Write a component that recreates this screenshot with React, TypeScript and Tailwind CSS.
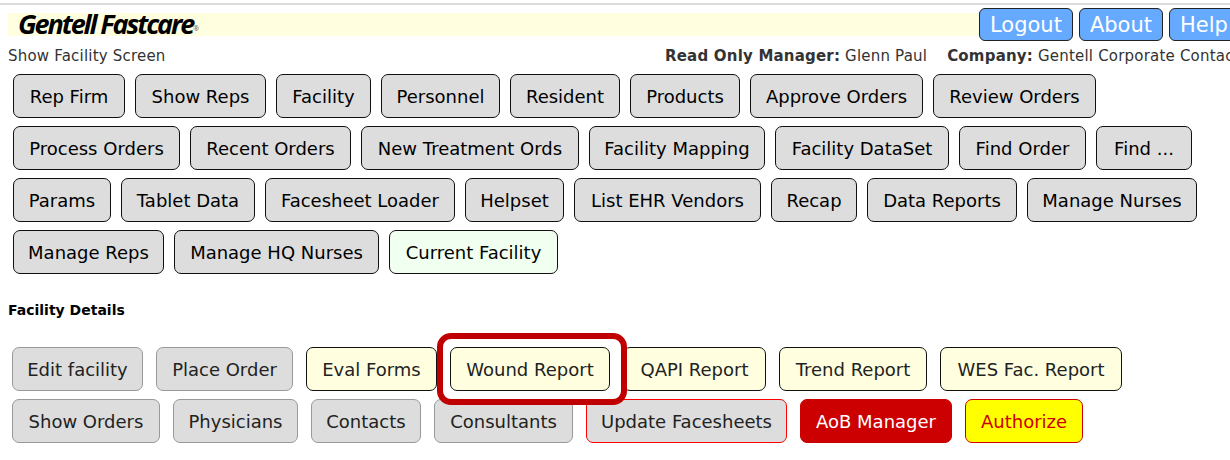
const topButtons = [
  { label: 'Rep Firm', w: 'w-[112px]' },
  { label: 'Show Reps', w: 'w-[131px]' },
  { label: 'Facility', w: 'w-[95px]' },
  { label: 'Personnel', w: 'w-[119px]' },
  { label: 'Resident', w: 'w-[110px]' },
  { label: 'Products', w: 'w-[110px]' },
  { label: 'Approve Orders', w: 'w-[173px]' },
  { label: 'Review Orders', w: 'w-[163px]' },
  { label: 'Process Orders', w: 'w-[167px]' },
  { label: 'Recent Orders', w: 'w-[161px]' },
  { label: 'New Treatment Ords', w: 'w-[218px]' },
  { label: 'Facility Mapping', w: 'w-[176px]' },
  { label: 'Facility DataSet', w: 'w-[174px]' },
  { label: 'Find Order', w: 'w-[127px]' },
  { label: 'Find ...', w: 'w-[96px]' },
  { label: 'Params', w: 'w-[98px]' },
  { label: 'Tablet Data', w: 'w-[134px]' },
  { label: 'Facesheet Loader', w: 'w-[190px]' },
  { label: 'Helpset', w: 'w-[99px]' },
  { label: 'List EHR Vendors', w: 'w-[187px]' },
  { label: 'Recap', w: 'w-[86px]' },
  { label: 'Data Reports', w: 'w-[150px]' },
  { label: 'Manage Nurses', w: 'w-[170px]' },
  { label: 'Manage Reps', w: 'w-[151px]' },
  { label: 'Manage HQ Nurses', w: 'w-[205px]' },
];

const base = 'h-[44px] pt-[1px] rounded-[7px] border whitespace-nowrap text-[18px] leading-none';
const gray = `${base} bg-[#dddddd] border-[#999999] text-[#222222]`;
const cream = `${base} bg-[#ffffe0] border-[#111111] text-[#222222]`;

export default function App() {
  return (
    <div className="relative w-[1230px] h-[460px] overflow-hidden bg-white font-['DejaVu_Sans',Verdana,sans-serif]">
      <div className="h-[2px] mt-[3px] bg-[#dddddd]" />

      <div className="relative h-[39px]">
        <div className="absolute left-[8px] right-[250px] top-[8px] h-[23px] bg-[#ffffe0]" />
        <div className="absolute left-[18px] top-[2px] font-['Open_Sans',Arial,sans-serif] font-bold italic text-[27px] leading-[34px] tracking-[-2.1px] text-black">
          Gentell Fastcare<sup className="text-[7px] font-normal tracking-normal text-[#555555]">®</sup>
        </div>
        <div className="absolute left-[979px] top-[3px] flex gap-[6px]">
          {['Logout', 'About', 'Help'].map((label) => (
            <button
              key={label}
              className="h-[33px] pt-[2px] px-[10px] rounded-[6px] border border-[#222222] bg-[#66aaff] text-white text-[21px] leading-none whitespace-nowrap"
            >
              {label}
            </button>
          ))}
        </div>
      </div>

      <div className="flex h-[23px] pt-[2px] items-center pl-[8px] text-[15px] tracking-[0.2px] text-[#333333] whitespace-nowrap">
        <span className="w-[657px] shrink-0">Show Facility Screen</span>
        <span className="shrink-0"><b>Read Only Manager:</b> Glenn Paul</span>
        <span className="ml-[20px] shrink-0"><b>Company:</b> Gentell Corporate Contact</span>
      </div>

      <div className="flex flex-wrap gap-x-[10px] gap-y-[8px] pl-[13px] pt-[7px]">
        {topButtons.map((b) => (
          <button key={b.label} className={`${base} ${b.w} bg-[#dddddd] border-[#111111] text-black`}>
            {b.label}
          </button>
        ))}
        <button className={`${base} w-[169px] bg-[#f0fff0] border-[#111111] text-black`}>Current Facility</button>
      </div>

      <div className="pl-[8px] mt-[26px] text-[14px] font-bold leading-[20px] text-black">Facility Details</div>

      <div className="flex gap-x-[13px] pl-[12px] mt-[27px]">
        <button className={`${gray} w-[131px]`}>Edit facility</button>
        <button className={`${gray} w-[137px]`}>Place Order</button>
        <button className={`${cream} w-[131px]`}>Eval Forms</button>
        <button className={`${cream} w-[160px]`}>Wound Report</button>
        <button className={`${cream} w-[143px]`}>QAPI Report</button>
        <button className={`${cream} w-[148px]`}>Trend Report</button>
        <button className={`${cream} w-[182px]`}>WES Fac. Report</button>
      </div>
      <div className="flex gap-x-[13px] pl-[12px] mt-[8px]">
        <button className={`${gray} w-[148px]`}>Show Orders</button>
        <button className={`${gray} w-[125px]`}>Physicians</button>
        <button className={`${gray} w-[110px]`}>Contacts</button>
        <button className={`${gray} w-[139px]`}>Consultants</button>
        <button className={`${gray} w-[201px] border-[#ff0000]`}>Update Facesheets</button>
        <button className={`${base} w-[152px] bg-[#cc0000] border-[#cc0000] text-white`}>AoB Manager</button>
        <button className={`${base} w-[118px] bg-[#ffff00] border-[#cc0000] text-[#cc0000]`}>Authorize</button>
      </div>

      <div className="absolute left-[437px] top-[333px] w-[190px] h-[72px] rounded-[14px] border-[6px] border-[#c00000]" />
    </div>
  );
}
